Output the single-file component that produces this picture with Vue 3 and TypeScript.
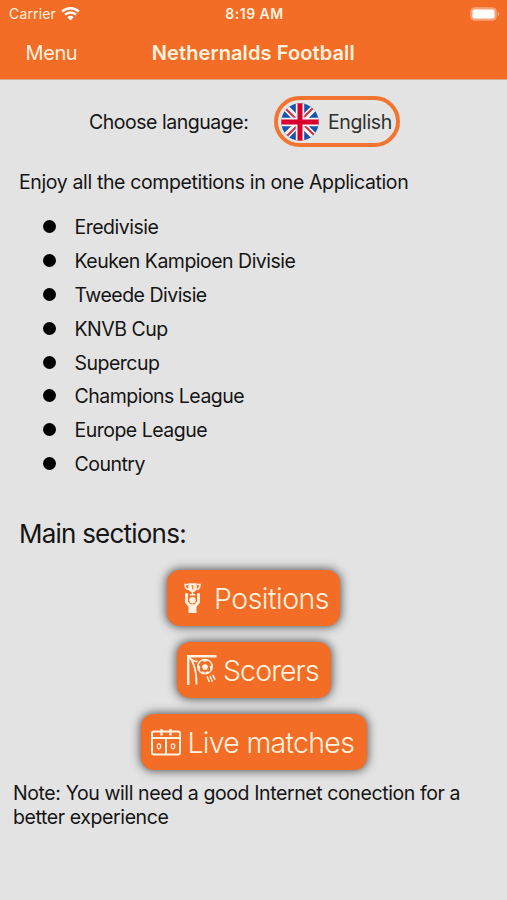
<script setup lang="ts">
const competitions: string[] = [
  'Eredivisie',
  'Keuken Kampioen Divisie',
  'Tweede Divisie',
  'KNVB Cup',
  'Supercup',
  'Champions League',
  'Europe League',
  'Country',
]
</script>

<template>
  <div class="screen">
    <header class="top">
      <div class="status">
        <div class="carrier">
          <span>Carrier</span>
          <svg class="wifi" width="19" height="14" viewBox="0 0 19 14">
            <path d="M1.2 4.600a12 12 0 0 1 16.6 0" />
            <path d="M4 7.700a8 8 0 0 1 11 0" />
            <path class="dot" d="M6.3 10.300a4.800 4.800 0 0 1 6.400 0L9.500 13.500z" />
          </svg>
        </div>
        <span class="time">8:19 AM</span>
        <svg class="battery" width="30" height="14" viewBox="0 0 30 14">
          <rect x="0.7" y="0.7" width="25.6" height="12.6" rx="3.8" />
          <rect class="charge" x="2.5" y="2.5" width="22" height="9" rx="2" />
          <path class="cap" d="M27.7 4.8c2 .7 2 3.7 0 4.4z" />
        </svg>
      </div>
      <nav class="nav">
        <span class="menu">Menu</span>
        <h1 class="title">Nethernalds Football</h1>
      </nav>
    </header>

    <main>
      <div class="language">
        <span class="choose">Choose language:</span>
        <button class="picker">
          <svg width="38" height="38" viewBox="0 0 38 38">
            <defs><clipPath id="disc"><circle cx="19" cy="19" r="18.7" /></clipPath></defs>
            <g clip-path="url(#disc)">
              <rect width="38" height="38" fill="#1554b0" />
              <path d="M0 0L38 38M38 0L0 38" stroke="#f7f4f6" stroke-width="6.6" />
              <path d="M4 5L16 17M22 15L34 3M34 33L22 21M16 23L4 35" stroke="#d72a43" stroke-width="2" />
              <path d="M19 0V38M0 19H38" stroke="#f7f4f6" stroke-width="8.4" />
              <path d="M19 0V38M0 19H38" stroke="#d8002c" stroke-width="5" />
            </g>
          </svg>
          <span class="english">English</span>
        </button>
      </div>

      <p class="intro">Enjoy all the competitions in one Application</p>
      <ul class="list">
        <li v-for="name in competitions" :key="name"><i class="bullet"></i><span>{{ name }}</span></li>
      </ul>

      <h2 class="heading">Main sections:</h2>

      <div class="actions">
        <button class="action positions">
          <svg width="17" height="30" viewBox="0 0 17 30">
            <path d="M4.300.3h8.400v4.500c0 2.700-1.800 4.400-4.200 4.400S4.300 7.500 4.300 4.800z" fill="#fff2df" />
            <path d="M4 1.500H1c0 3 1.200 4.800 4 5M13 1.500h3c0 3-1.200 4.800-4 5M8.500 8.500v3.500M5.800 11.700h5.400" fill="none" stroke="#fff2df" stroke-width="1.500" />
            <path d="M8.800 2.300v4.200M7.600 3.300l1.200-.9" fill="none" stroke="#f36d27" stroke-width="1.100" />
            <circle cx="8.500" cy="17.300" r="3.200" fill="#fff2df" />
            <path d="M1.100 10.200h2.800v8.300l2.400 2.700h4.400l2.400-2.700v-8.300h2.800v9.500l-3.400 4V30h-8v-6.300l-3.400-4z" fill="#fff2df" />
          </svg>
          <span>Positions</span>
        </button>
        <button class="action scorers">
          <svg width="30" height="31" viewBox="0 0 30 31">
            <g fill="none" stroke="#fff2df">
              <path d="M1.200 30V1.200H29.500" stroke-width="2.400" />
              <path d="M2 2c5 5 7.500 14 7.500 27.500M2 2c3 3.500 5 4.500 8.500 4.500" stroke-width="1.800" />
              <circle cx="18" cy="11.700" r="7.200" stroke-width="1.400" />
              <path d="M20 21.300l2.400 5.700M22.900 20.700l2.500 6M25.700 19.700l2.400 5" stroke-width="1.500" />
            </g>
            <g transform="translate(-.5 -.5)" fill="#fff2df">
              <path d="M18.500 9.200l3.200 2.400-1.200 3.700h-4l-1.200-3.700zM14.500 5.800l4 1.600 4-1.600-4-1zM11.100 10.200l2.600 1.500-.4 3.800-2.200-1.500zM25.900 10.200l-2.600 1.500.4 3.800 2.200-1.500zM15.300 16.800l2.900.6-.5 2.200-3.200-1zM21.700 16.800l-2.900.6.5 2.200 3.200-1z" />
            </g>
          </svg>
          <span>Scorers</span>
        </button>
        <button class="action live">
          <svg width="30" height="27" viewBox="0 0 30 27">
            <g fill="none" stroke="#fff2df">
              <rect x="1" y="2.500" width="28" height="23" rx="2" stroke-width="2" />
              <path d="M1 9h28M15 9v16.500" stroke-width="2" />
              <path d="M10.500 0v6.500M19.500 0v6.500" stroke-width="2.300" />
              <ellipse cx="8" cy="17.300" rx="1.700" ry="2.500" stroke-width="1.200" />
              <ellipse cx="22" cy="17.300" rx="1.700" ry="2.500" stroke-width="1.200" />
            </g>
          </svg>
          <span>Live matches</span>
        </button>
      </div>

      <p class="note">Note: You will need a good Internet conection for a better experience</p>
    </main>
  </div>
</template>

<style>
body {
  background: #e3e3e3;
}
</style>

<style scoped>
.screen {
  width: 507px;
  height: 900px;
  overflow: hidden;
  background: #e3e3e3;
  color: #151515;
  font-family: Inter, 'Liberation Sans', sans-serif;
}
h1, h2, p, ul { margin: 0; padding: 0; font-weight: 400; }
button { font: inherit; margin: 0; border: 0; box-sizing: border-box; }
svg { display: block; flex: none; }
.top {
  height: 80px;
  box-sizing: border-box;
  background: #f36d27;
  border-bottom: 1px solid #dfa88b;
  color: #fff2df;
}
.status {
  height: 27px;
  display: grid;
  grid-template-columns: 1fr auto 1fr;
  align-items: center;
  padding: 0 7px 0 9px;
  box-sizing: border-box;
  font-size: 14px;
}
.carrier { display: flex; align-items: center; gap: 5px; letter-spacing: 0.15px; }
.wifi { fill: none; stroke: #fff; stroke-width: 2.3; }
.wifi .dot { fill: #fff; stroke: none; }
.time { font-weight: 600; font-size: 14px; letter-spacing: 0.5px; }
.battery { justify-self: end; fill: #f7a277; stroke: #f7a277; stroke-width: 1; }
.battery .charge { fill: #fff; stroke: none; }
.battery .cap { stroke: none; }
.nav {
  height: 51px;
  display: grid;
  grid-template-columns: 1fr auto 1fr;
  align-items: center;
  padding: 0 26px 0 25.5px;
  line-height: 26px;
}
.menu { font-size: 20px; letter-spacing: -0.4px; }
.title { font-size: 20px; font-weight: 600; letter-spacing: 0.1px; }
.language {
  display: flex;
  align-items: center;
  height: 51px;
  margin-top: 16px;
  padding-left: 89px;
  font-size: 19.5px;
  letter-spacing: -0.47px;
}
.choose { width: 185px; white-space: nowrap; }
.picker {
  width: 126px;
  height: 51px;
  border: 4px solid #f37430;
  border-radius: 26px;
  background: #e5e5e3;
  display: flex;
  align-items: center;
  gap: 9px;
  padding: 0 0 0 3px;
  color: #303030;
  letter-spacing: -0.38px;
}
.intro {
  margin: 23px 0 0 19px;
  font-size: 19.5px;
  line-height: 24px;
  letter-spacing: -0.37px;
  white-space: nowrap;
}
.list { list-style: none; margin: 16px 0 0 43px; font-size: 19.5px; letter-spacing: -0.51px; }
.list li { height: 33.8px; display: flex; align-items: center; gap: 18.5px; }
.list span { padding-top: 1px; }
.bullet { width: 13px; height: 13px; border-radius: 50%; background: #000; }
.heading { margin: 37px 0 0 19px; font-size: 26px; line-height: 34px; letter-spacing: -0.78px; }
.actions {
  display: flex;
  flex-direction: column;
  align-items: center;
  gap: 16px;
  margin-top: 19px;
}
.action {
  height: 56px;
  border-radius: 13px;
  background: #f36d27;
  color: #fff2df;
  box-shadow: 0 0 10px 1px #555;
  display: flex;
  align-items: center;
  font-size: 28.5px;
  font-weight: 350;
  white-space: nowrap;
  padding: 0;
}
.positions { width: 173px; padding-left: 17px; gap: 13px; letter-spacing: -0.5px; }
.scorers { width: 154px; padding-left: 10px; gap: 6.5px; letter-spacing: -0.9px; }
.live { width: 226px; padding-left: 10px; gap: 7px; letter-spacing: -0.72px; }
.note {
  margin: 12px 0 0 13px;
  width: 475px;
  font-size: 19.5px;
  line-height: 23.5px;
  letter-spacing: -0.4px;
}
</style>
